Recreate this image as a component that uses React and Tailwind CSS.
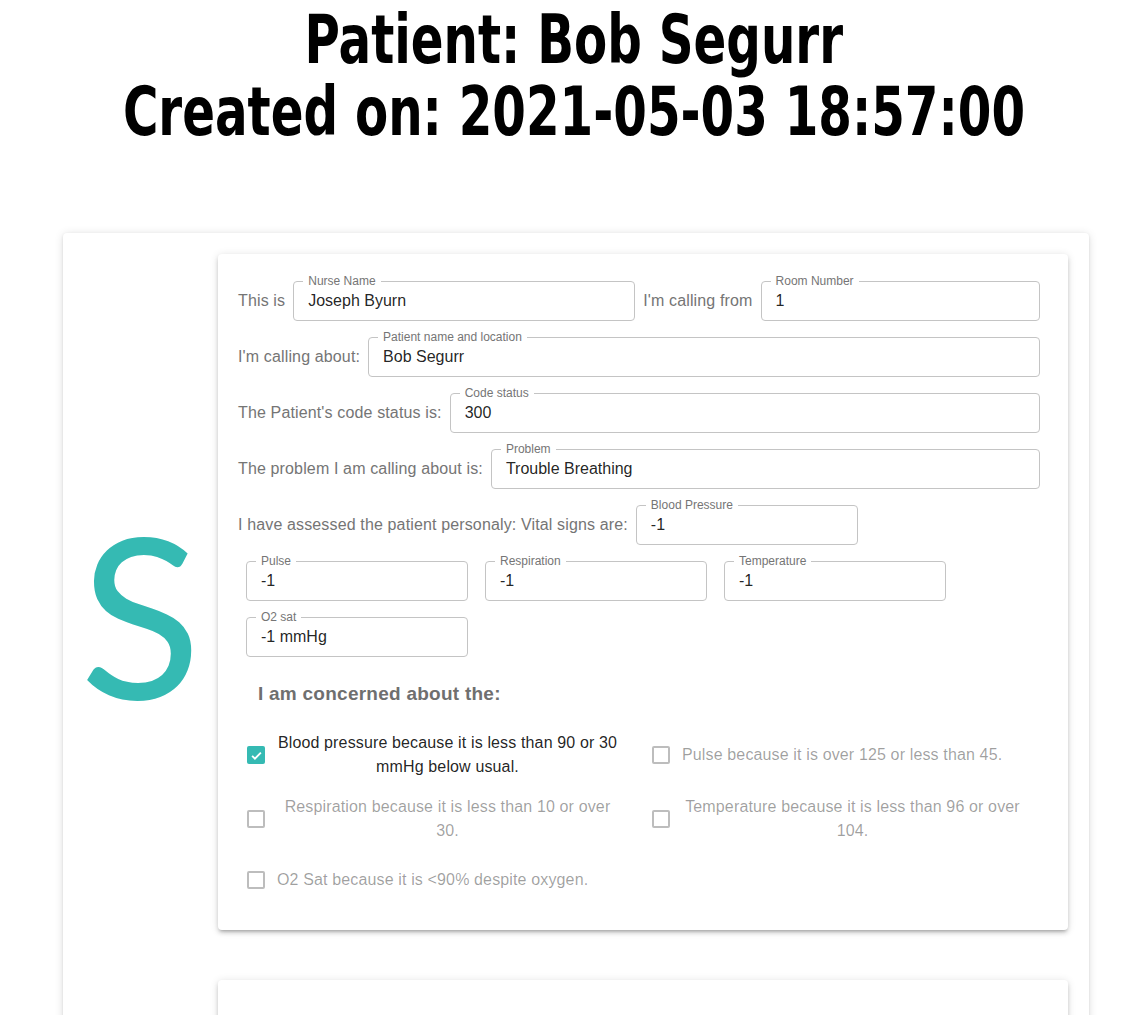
import React from "react";

const SANS = { fontFamily: "'Liberation Sans', Arial, sans-serif" };

function Field({ label, value, className = "" }) {
  return (
    <div className={`relative m-2 h-10 shrink-0 rounded border border-[#c4c4c4] ${className}`}>
      <span className="absolute -top-[9px] left-[9px] bg-white px-[5px] text-[12px] leading-4 text-[#757575]">
        {label}
      </span>
      <div className="flex h-full items-center pl-[14px] text-base text-[rgba(0,0,0,0.87)]">{value}</div>
    </div>
  );
}

function Lead({ children }) {
  return <span className="shrink-0 text-base tracking-[0.14px] text-[#757575]">{children}</span>;
}

function Check({ checked, children }) {
  return (
    <div className="flex items-center">
      <div className="flex h-[42px] w-[42px] shrink-0 items-center justify-center">
        {checked ? (
          <div className="flex h-[18px] w-[18px] items-center justify-center rounded-[2px] bg-[#35bab3]">
            <svg viewBox="0 0 24 24" className="h-[15px] w-[15px]" fill="none" stroke="white" strokeWidth="3">
              <path d="M5 12.5l4.5 4.5L19 7.5" />
            </svg>
          </div>
        ) : (
          <div className="h-[18px] w-[18px] rounded-[2px] border-2 border-[#bdbdbd]" />
        )}
      </div>
      <span
        className={`mr-[22px] text-center text-base leading-6 tracking-[0.14px] ${
          checked ? "text-[rgba(0,0,0,0.87)]" : "text-[rgba(0,0,0,0.38)]"
        }`}
      >
        {children}
      </span>
    </div>
  );
}

function SbarCard() {
  return (
    <div className="rounded bg-white px-5 pb-[29px] pt-[19px] shadow-[0_3px_3px_-2px_rgba(0,0,0,0.2),0_3px_4px_0_rgba(0,0,0,0.14),0_1px_8px_0_rgba(0,0,0,0.12)]">
      <div className="flex items-center">
        <Lead>This is</Lead>
        <Field label="Nurse Name" value="Joseph Byurn" className="w-[342px]" />
        <Lead>I'm calling from</Lead>
        <Field label="Room Number" value="1" className="flex-1" />
      </div>
      <div className="flex items-center">
        <Lead>I'm calling about:</Lead>
        <Field label="Patient name and location" value="Bob Segurr" className="flex-1" />
      </div>
      <div className="flex items-center">
        <Lead>The Patient's code status is:</Lead>
        <Field label="Code status" value="300" className="flex-1" />
      </div>
      <div className="flex items-center">
        <Lead>The problem I am calling about is:</Lead>
        <Field label="Problem" value="Trouble Breathing" className="flex-1" />
      </div>
      <div className="flex items-center">
        <Lead>I have assessed the patient personaly: Vital signs are:</Lead>
        <Field label="Blood Pressure" value="-1" className="w-[222px]" />
      </div>
      <div className="flex gap-px">
        <Field label="Pulse" value="-1" className="w-[222px]" />
        <Field label="Respiration" value="-1" className="w-[222px]" />
        <Field label="Temperature" value="-1" className="w-[222px]" />
      </div>
      <div className="flex">
        <Field label="O2 sat" value="-1 mmHg" className="w-[222px]" />
      </div>

      <h3 className="mb-[25px] mt-[17px] pl-5 text-[19px] font-bold leading-6 tracking-[0.25px] text-[#6f6f6f]">
        I am concerned about the:
      </h3>

      <div className="-ml-[3px] grid w-[810px] grid-cols-2 gap-y-4">
        <Check checked>Blood pressure because it is less than 90 or 30 mmHg below usual.</Check>
        <Check>Pulse because it is over 125 or less than 45.</Check>
        <Check>Respiration because it is less than 10 or over 30.</Check>
        <Check>Temperature because it is less than 96 or over 104.</Check>
        <Check>O2 Sat because it is &lt;90% despite oxygen.</Check>
      </div>
    </div>
  );
}

export default function App() {
  return (
    <div className="min-h-screen bg-white pb-10" style={SANS}>
      <h1
        className="flex flex-col items-center pl-2 pt-1 text-[68px] font-bold leading-[72px] text-black"
        style={{ fontFamily: "'DejaVu Sans Condensed', 'DejaVu Sans', sans-serif" }}
      >
        <span className="inline-block scale-x-[0.79] whitespace-nowrap">Patient: Bob Segurr</span>
        <span className="inline-block scale-x-[0.79] whitespace-nowrap">Created on: 2021-05-03 18:57:00</span>
      </h1>

      <div className="ml-[63px] mt-[85px] flex w-[1026px] rounded bg-white pb-10 pr-[21px] pt-[21px] shadow-[0_1px_10px_rgba(0,0,0,0.12),0_1px_3px_rgba(0,0,0,0.1)]">
        <div className="flex w-[155px] shrink-0 justify-center pt-[247px]">
          <span
            className="text-[224px] leading-none text-[#35bab3]"
            style={{ fontFamily: "Lato, 'Open Sans', sans-serif" }}
          >
            S
          </span>
        </div>
        <div className="flex flex-1 flex-col gap-[50px]">
          <SbarCard />
          <div className="h-[400px] rounded bg-white shadow-[0_3px_3px_-2px_rgba(0,0,0,0.2),0_3px_4px_0_rgba(0,0,0,0.14),0_1px_8px_0_rgba(0,0,0,0.12)]" />
        </div>
      </div>
    </div>
  );
}
